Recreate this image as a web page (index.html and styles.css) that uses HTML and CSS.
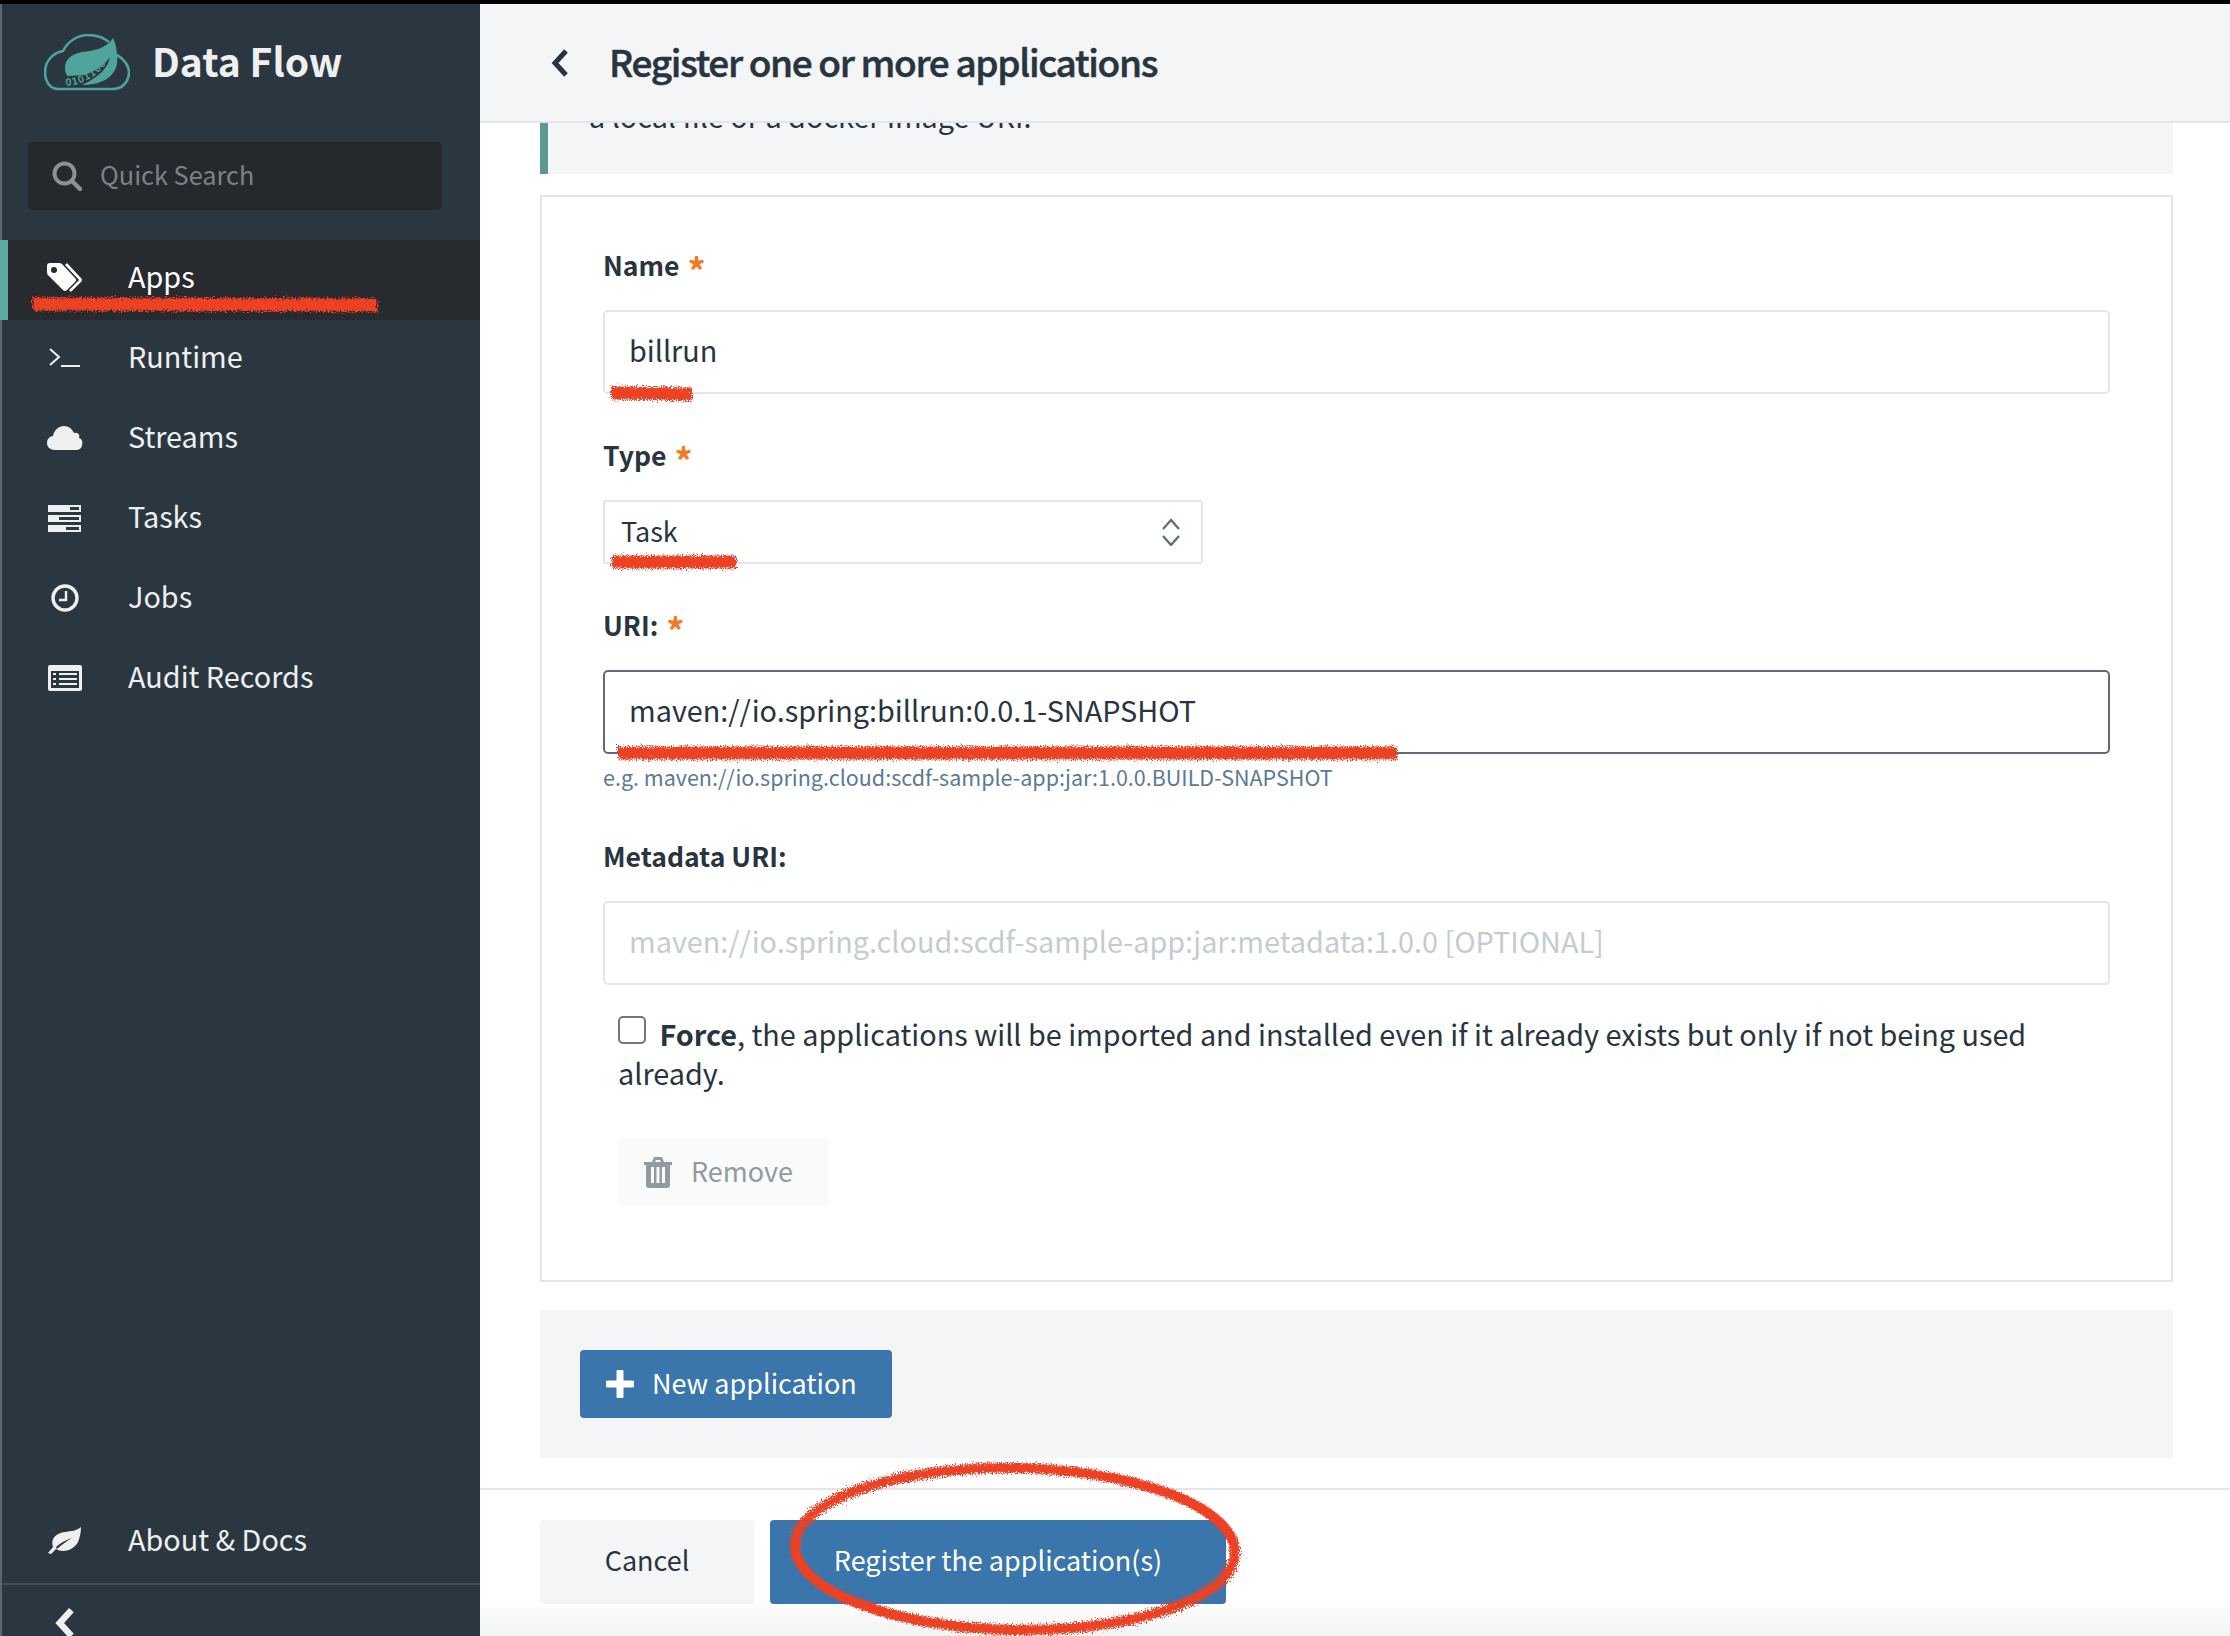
FILE: index.html
```html
<!DOCTYPE html>
<html lang="en">
<head>
    <meta charset="UTF-8">
    <meta name="viewport" content="width=device-width, initial-scale=1.0">
    <title>Data Flow - Register applications</title>
    <link rel="stylesheet" href="styles.css">
</head>
<body>
    <div class="app">
        <aside class="sidebar">
            <div class="brand">
                <svg class="logo" viewBox="0 0 86 58">
                    <path d="M65 8 C60 4 53 1 44 1 C34 1 24 7 19 17 C8 19 1 28 1 38 C1 46 5 55 14 55 L69 55 C78 55 85 48 85 38 C85 32 80 25 73 21" fill="none" stroke="#4fa49c" stroke-width="2.6"/>
                    <path d="M69 4 C63 14 50 17 38 18 C27 20 21 26 21 33 C21 38 22 41 24 42 L40 41 C50 38 60 32 66 23 C64 34 55 43 38 51 C55 51 70 45 73 30 C74 20 72 10 69 4 Z" fill="#4fa49c"/>
                    <path id="bitsCurve" d="M22 52 C40 51 58 40 67 22" fill="none"/>
                    <text class="logo-bits"><textPath href="#bitsCurve">0101100</textPath></text>
                </svg>
                <span class="brand-name">Data Flow</span>
            </div>

            <div class="search">
                <svg class="search-icon" viewBox="0 0 30 30">
                    <circle cx="12.5" cy="12.5" r="10" fill="none" stroke="#8c9194" stroke-width="4"/>
                    <line x1="20" y1="20" x2="28" y2="28" stroke="#8c9194" stroke-width="4.5" stroke-linecap="round"/>
                </svg>
                <span>Quick Search</span>
            </div>

            <nav class="nav">
                <div class="nav-item active">
                    <svg class="nav-icon" viewBox="0 0 36 30">
                        <path fill-rule="evenodd" d="M3 0 H12 Q14 0 15 1 L28 15 Q30 17 28 19 L20 27 Q18 29 16 27 L2 13 Q0 12 0 9 V3 Q0 0 3 0 Z M7 4 A3 3 0 1 0 7.01 10 A3 3 0 1 0 7 4 Z" fill="#fff"/>
                        <path d="M19 1 L33 16 Q34 17 33 18 L23 28" fill="none" stroke="#fff" stroke-width="2.6"/>
                    </svg>
                    <span>Apps</span>
                </div>
                <div class="nav-item">
                    <svg class="nav-icon" viewBox="0 0 36 30">
                        <path d="M3 6 L12 14 L3 22" fill="none" stroke="#eef0f0" stroke-width="2"/>
                        <rect x="14" y="22" width="19" height="2" fill="#eef0f0"/>
                    </svg>
                    <span>Runtime</span>
                </div>
                <div class="nav-item">
                    <svg class="nav-icon" viewBox="0 0 36 30">
                        <path d="M8 27 C3 27 0 24 0 20 C0 16 3 13 6 13 C7 7 12 3 17 3 C22 3 25 6 27 10 C32 9 33 13 32 15 C35 16 36 19 35 22 C35 25 32 27 29 27 Z" fill="#eef0f0"/>
                    </svg>
                    <span>Streams</span>
                </div>
                <div class="nav-item">
                    <svg class="nav-icon" viewBox="0 0 36 30">
                        <path fill-rule="evenodd" d="M1 2 H34 V9 H1 Z M23 4 V7 H32 V4 Z M1 12 H34 V19 H1 Z M12 14 V17 H32 V14 Z M1 22 H34 V29 H1 Z M19 24 V27 H32 V24 Z" fill="#eef0f0"/>
                    </svg>
                    <span>Tasks</span>
                </div>
                <div class="nav-item">
                    <svg class="nav-icon" viewBox="0 0 36 30">
                        <circle cx="18" cy="15" r="12" fill="none" stroke="#eef0f0" stroke-width="3.4"/>
                        <path d="M19 8 V17 H12" fill="none" stroke="#eef0f0" stroke-width="2.4"/>
                    </svg>
                    <span>Jobs</span>
                </div>
                <div class="nav-item">
                    <svg class="nav-icon" viewBox="0 0 36 30">
                        <path fill-rule="evenodd" d="M3 2 H33 Q35 2 35 4 V26 Q35 28 33 28 H3 Q1 28 1 26 V4 Q1 2 3 2 Z M4 8 V25 H32 V8 Z" fill="#eef0f0"/>
                        <path d="M6 11 H9 M12 11 H30 M6 16 H9 M12 16 H30 M6 21 H9 M12 21 H30" stroke="#eef0f0" stroke-width="2.2"/>
                    </svg>
                    <span>Audit Records</span>
                </div>
            </nav>

            <div class="nav-bottom">
                <div class="nav-item">
                    <svg class="nav-icon" viewBox="0 0 36 30">
                        <path fill-rule="evenodd" d="M1 27 L4 28 L9 23 C15 27 26 25 31 16 C33 11 34 6 34 1 C30 5 24 5 18 6 C10 7 3 12 6 21 Z M9 21 C13 17 19 14 25 12 C19 16 14 19 10 23 Z" fill="#eef0f0"/>
                    </svg>
                    <span>About &amp; Docs</span>
                </div>
                <div class="collapse">
                    <svg class="collapse-icon" viewBox="0 0 20 30">
                        <path d="M16 3 L5 15 L16 27" fill="none" stroke="#eef0f0" stroke-width="6"/>
                    </svg>
                </div>
            </div>
        </aside>

        <main class="main">
            <header class="page-header">
                <svg class="back-icon" viewBox="0 0 20 30">
                    <path d="M16 3 L5 15 L16 27" fill="none" stroke="#28343e" stroke-width="5"/>
                </svg>
                <h1>Register one or more applications</h1>
            </header>

            <div class="content">
                <div class="info-box">
                    <p>a local file or a docker image URI.</p>
                </div>

                <form class="card">
                    <div class="form-group">
                        <div class="label">Name <span class="req">*</span></div>
                        <div class="field">billrun</div>
                    </div>
                    <div class="form-group">
                        <div class="label">Type <span class="req">*</span></div>
                        <div class="select">
                            <span>Task</span>
                            <svg class="select-arrows" viewBox="0 0 18 28">
                                <path d="M1 11 L9 2 L17 11 M1 18 L9 27 L17 18" fill="none" stroke="#5f7280" stroke-width="2.4"/>
                            </svg>
                        </div>
                    </div>
                    <div class="form-group has-help">
                        <div class="label">URI: <span class="req">*</span></div>
                        <div class="field focus">maven://io.spring:billrun:0.0.1-SNAPSHOT</div>
                        <div class="help">e.g. maven://io.spring.cloud:scdf-sample-app:jar:1.0.0.BUILD-SNAPSHOT</div>
                    </div>
                    <div class="form-group last">
                        <div class="label">Metadata URI:</div>
                        <div class="field placeholder">maven://io.spring.cloud:scdf-sample-app:jar:metadata:1.0.0 [OPTIONAL]</div>
                    </div>
                    <label class="force">
                        <input type="checkbox">
                        <b>Force</b>, the applications will be imported and installed even if it already exists but only if not being used already.
                    </label>
                    <button type="button" class="btn-remove">
                        <svg class="trash" viewBox="0 0 28 32">
                            <path fill-rule="evenodd" d="M0 6 H8 L10 1 H18 L20 6 H28 V9 H26 V29 Q26 32 23 32 H5 Q2 32 2 29 V9 H0 Z M11 6 H17 L16 4 H12 Z M7 11 V27 H10 V11 Z M12.5 11 V27 H15.5 V11 Z M18 11 V27 H21 V11 Z" fill="#939a9f"/>
                        </svg>
                        <span>Remove</span>
                    </button>
                </form>

                <div class="panel">
                    <button type="button" class="btn btn-new">
                        <svg class="plus" viewBox="0 0 28 28">
                            <path d="M14 2 V26 M2 14 H26" stroke="#fff" stroke-width="7" stroke-linecap="round"/>
                        </svg>
                        <span>New application</span>
                    </button>
                </div>
            </div>

            <footer class="footer">
                <button type="button" class="btn btn-cancel">Cancel</button>
                <button type="button" class="btn btn-register">Register the application(s)</button>
            </footer>
        </main>
    </div>

    <!-- red pen marks drawn on the screenshot -->
    <svg class="marks" viewBox="0 0 2230 1636">
        <filter id="rough" x="-5%" y="-50%" width="110%" height="200%" filterUnits="objectBoundingBox">
            <feTurbulence type="fractalNoise" baseFrequency="0.8" numOctaves="2" seed="4"/>
            <feDisplacementMap in="SourceGraphic" scale="10"/>
        </filter>
        <g filter="url(#rough)" fill="none" stroke="#ee4023">
            <path d="M33 304 L377 305" stroke-width="13"/>
            <path d="M611 393 L692 394" stroke-width="13"/>
            <path d="M612 562 L736 562" stroke-width="13"/>
            <path d="M618 753 L1397 753" stroke-width="13"/>
            <ellipse cx="1015" cy="1549" rx="220" ry="81" stroke-width="10" transform="rotate(1 1015 1549)"/>
        </g>
    </svg>
</body>
</html>
```

FILE: styles.css
```css
* {
    box-sizing: border-box;
}
html, body {
    margin: 0;
    height: 100%;
    overflow: hidden;
}
body {
    position: relative;
    font-family: "Noto Sans CJK SC", "Noto Sans", sans-serif;
    font-size: 28.8px;
    line-height: 40px;
    color: #28343e;
    background-color: #000;
    padding-top: 4px;
}
.app {
    display: flex;
    height: 1632px;
}

/* sidebar */
.sidebar {
    width: 480px;
    flex: none;
    display: flex;
    flex-direction: column;
    background-color: #2a3741;
    border-left: 2px solid #5c6670;
    color: #eef0f0;
}
.brand {
    height: 138px;
    display: flex;
    align-items: center;
    padding: 0 0 20px 42px;
    gap: 22px;
}
.logo {
    width: 86px;
    height: 58px;
}
.logo-bits {
    font-size: 10px;
    letter-spacing: 1px;
    fill: #4fa49c;
    font-weight: 700;
}
.brand-name {
    font-size: 39px;
    font-weight: 700;
    line-height: 50px;
    margin-bottom: 6px;
}
.search {
    height: 68px;
    margin: 0 38px 0 26px;
    padding-left: 24px;
    display: flex;
    align-items: center;
    gap: 18px;
    background-color: #25292d;
    border-radius: 5px;
    color: #7d8285;
    font-size: 25.3px;
}
.search span {
    margin-bottom: 4px;
}
.search-icon {
    width: 30px;
    height: 30px;
}
.nav {
    margin-top: 30px;
}
.nav-item {
    height: 80px;
    display: flex;
    align-items: center;
    padding-left: 45px;
    padding-bottom: 4px;
    gap: 45px;
}
.nav-item span {
    margin-bottom: 4px;
}
.nav-item.active {
    margin-left: -2px;
    padding-left: 47px;
    background-color: #272b2f;
    box-shadow: inset 8px 0 0 #5bab9f;
    color: #fff;
}
.nav-icon {
    width: 36px;
    height: 30px;
    flex: none;
}
.nav-bottom {
    margin-top: auto;
}
.collapse {
    height: 53px;
    border-top: 2px solid #424e57;
    padding: 22px 0 0 52px;
}
.collapse-icon {
    width: 22px;
    height: 32px;
    display: block;
}

/* main column */
.main {
    flex: 1;
    min-width: 0;
    display: flex;
    flex-direction: column;
    background-color: #fff;
}
.page-header {
    height: 119px;
    flex: none;
    display: flex;
    align-items: center;
    gap: 39px;
    padding-left: 70px;
    background-color: #f4f5f7;
    border-bottom: 2px solid #e3e6e9;
}
.page-header h1 {
    margin: 0 0 4px;
    font-size: 37px;
    font-weight: 500;
    letter-spacing: -1.35px;
    line-height: 50px;
    -webkit-text-stroke: 0.5px #28343e;
}
.back-icon {
    width: 20px;
    height: 30px;
}
.content {
    flex: 1;
    padding: 0 57px 0 60px;
}
.info-box {
    height: 51px;
    overflow: hidden;
    padding-left: 41px;
    background-color: #f4f5f7;
    border-left: 8px solid #5b9a92;
    margin-bottom: 21px;
}
.info-box p {
    margin: -27px 0 0;
}

/* form */
.card {
    height: 1087px;
    padding: 49px 61px 0;
    border: 2px solid #e3e6e9;
}
.form-group {
    margin-bottom: 42px;
}
.form-group.has-help {
    margin-bottom: 40px;
}
.form-group.last {
    margin-bottom: 29px;
}
.label {
    font-size: 26.5px;
    font-weight: 700;
    line-height: 37px;
    margin-bottom: 27px;
}
.req {
    color: #f07a28;
    font-size: 36px;
    margin-left: 2px;
    vertical-align: -9px;
    line-height: 0;
}
.field {
    height: 84px;
    padding: 0 24px 5px;
    display: flex;
    align-items: center;
    border: 2px solid #e3e6e9;
    border-radius: 5px;
}
.field.focus {
    border-color: #5d6c78;
}
.field.placeholder {
    color: #c5ccd1;
}
.help {
    margin-top: 3px;
    margin-bottom: 1px;
    font-size: 21.5px;
    color: #5b7a94;
}
.select {
    width: 600px;
    height: 64px;
    padding: 0 21px 0 16px;
    display: flex;
    align-items: center;
    justify-content: space-between;
    border: 2px solid #e3e6e9;
    border-radius: 3px;
    font-size: 27px;
}
.select span {
    margin-bottom: 3px;
}
.select-arrows {
    width: 18px;
    height: 28px;
}
.force {
    display: block;
    padding-left: 15px;
    line-height: 39px;
}
.force input {
    appearance: none;
    width: 28px;
    height: 28px;
    margin: 0 7px 0 0;
    vertical-align: 2px;
    border: 2px solid #767676;
    border-radius: 5px;
    background-color: #fff;
}
.btn-remove {
    width: 210px;
    height: 68px;
    margin: 46px 0 0 15px;
    display: flex;
    align-items: center;
    gap: 19px;
    padding: 0 0 0 26px;
    border: none;
    border-radius: 4px;
    background-color: #f9fafa;
    color: #939a9f;
    font: inherit;
    font-size: 27px;
}
.btn-remove span, .btn-new span {
    margin-bottom: 3px;
}
.trash {
    width: 28px;
    height: 32px;
}
.panel {
    height: 148px;
    margin-top: 28px;
    padding: 40px;
    background-color: #f4f5f7;
}
.btn {
    border: none;
    border-radius: 4px;
    font: inherit;
    font-size: 27px;
    cursor: pointer;
}
.btn-new {
    width: 312px;
    height: 68px;
    display: flex;
    align-items: center;
    gap: 18px;
    padding: 0 0 0 26px;
    background-color: #3a76ac;
    color: #fff;
}
.plus {
    width: 28px;
    height: 28px;
}

/* footer */
.footer {
    height: 148px;
    flex: none;
    padding: 30px 0 0 60px;
    display: flex;
    gap: 16px;
    align-items: flex-start;
    border-top: 2px solid #e3e6e9;
    background: linear-gradient(to bottom, #fff 75%, #f2f3f4);
}
.btn-cancel {
    width: 214px;
    height: 84px;
    padding-bottom: 5px;
    background-color: #f4f5f7;
    color: #28343e;
}
.btn-register {
    width: 456px;
    height: 84px;
    padding-bottom: 5px;
    background-color: #3a76ac;
    color: #fff;
}

/* annotation layer, lies over the screenshot */
.marks {
    position: absolute;
    top: 0;
    left: 0;
    width: 2230px;
    height: 1636px;
    pointer-events: none;
}
```
